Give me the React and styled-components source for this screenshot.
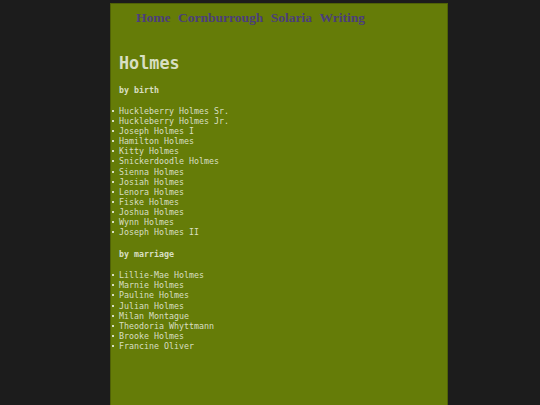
import React from "react";
import styled, { createGlobalStyle } from "styled-components";

const birth = [
  "Huckleberry Holmes Sr.",
  "Huckleberry Holmes Jr.",
  "Joseph Holmes I",
  "Hamilton Holmes",
  "Kitty Holmes",
  "Snickerdoodle Holmes",
  "Sienna Holmes",
  "Josiah Holmes",
  "Lenora Holmes",
  "Fiske Holmes",
  "Joshua Holmes",
  "Wynn Holmes",
  "Joseph Holmes II",
];

const marriage = [
  "Lillie-Mae Holmes",
  "Marnie Holmes",
  "Pauline Holmes",
  "Julian Holmes",
  "Milan Montague",
  "Theodoria Whyttmann",
  "Brooke Holmes",
  "Francine Oliver",
];

const App = () => {
  return (
    <>
      <GlobalStyle />
      <Page>
        <Nav>
          <NavLink href="#">Home</NavLink>
          <NavLink href="#">Cornburrough</NavLink>
          <NavLink href="#">Solaria</NavLink>
          <NavLink href="#">Writing</NavLink>
        </Nav>
        <Content>
          <Title>Holmes</Title>
          <Section>by birth</Section>
          <List>
            {birth.map((n) => (
              <Item key={n}>{n}</Item>
            ))}
          </List>
          <Section>by marriage</Section>
          <List>
            {marriage.map((n) => (
              <Item key={n}>{n}</Item>
            ))}
          </List>
        </Content>
      </Page>
    </>
  );
};

export default App;

const GlobalStyle = createGlobalStyle`
  html, body {
    margin: 0;
    padding: 0;
    background: #1c1c1c;
    height: 100%;
    overflow: hidden;
  }
  #root {
    height: 100%;
  }
`;

const Page = styled.div`
  box-sizing: border-box;
  margin: 3px 0 0 110px;
  width: 338px;
  min-height: 402px;
  background: #657c08;
  border: 1px solid #4f6106;
  border-bottom: none;
`;

const Nav = styled.nav`
  display: flex;
  gap: 7.5px;
  padding: 6px 0 0 25px;
  height: 22px;
`;

const NavLink = styled.a`
  font-family: "Liberation Serif", serif;
  font-weight: bold;
  font-size: 13.5px;
  color: #4b3e7c;
  text-decoration: none;
`;

const Content = styled.div`
  padding: 0 0 0 8px;
  font-family: "DejaVu Sans Mono", monospace;
  color: #d8dfc2;
`;

const Title = styled.h1`
  margin: 21px 0 12px;
  font-size: 16.8px;
  line-height: 20px;
  font-weight: bold;
`;

const Section = styled.h2`
  margin: 7px 0 0;
  font-size: 8.3px;
  line-height: 10px;
  font-weight: bold;
  height: 21px;
`;

const List = styled.ul`
  list-style: none;
  margin: 0 0 12px -8px;
  padding: 0;
`;

const Item = styled.li`
  position: relative;
  padding-left: 8px;
  font-size: 8.3px;
  line-height: 10.1px;
  &::before {
    content: "";
    position: absolute;
    left: 1px;
    top: 4px;
    width: 2px;
    height: 2px;
    background: #d8dfc2;
  }
`;
